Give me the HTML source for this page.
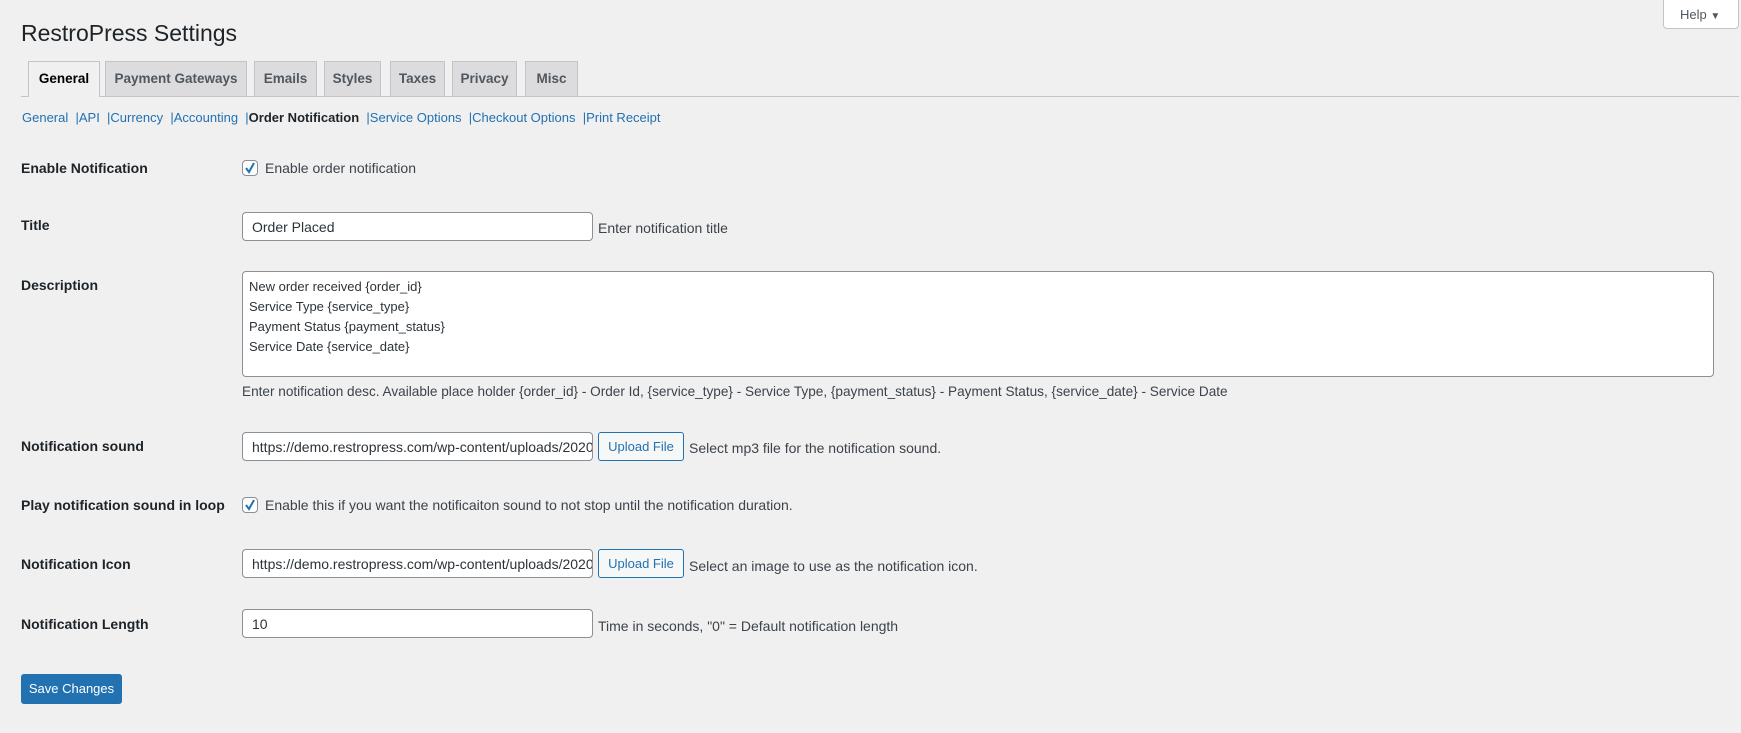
<!DOCTYPE html>
<html><head><meta charset="utf-8"><style>
*{box-sizing:border-box}
body{margin:0;width:1741px;height:733px;background:#f0f0f1;font-family:"Liberation Sans",sans-serif;font-size:14px;color:#3c434a;position:relative;overflow:hidden}
.a{position:absolute}
h1{position:absolute;left:21px;top:20px;margin:0;font-size:23px;font-weight:400;color:#1d2327}
.help{left:1663px;top:-1px;width:76px;height:30px;background:#fff;border:1px solid #c3c4c7;border-radius:0 0 4px 4px;font-size:13px;color:#50575e;padding:7px 0 0 16px}
.tabline{left:21px;top:96px;width:1718px;height:1px;background:#c3c4c7}
.tab{top:61px;height:35px;border:1px solid #c3c4c7;border-bottom:none;background:#dcdcde;font-size:13.5px;font-weight:600;color:#50575e;text-align:center;line-height:33px}
.tab.on{background:#f0f0f1;color:#000;height:36px}
.sub{left:22px;top:110px;font-size:13px;color:#2271b1}
.sub b{color:#1d2327;font-weight:600}
.lbl{left:21px;font-weight:600;color:#1d2327}
.inp{background:#fff;border:1px solid #8c8f94;border-radius:4px;height:29px;padding:6px 9px;color:#2c3338;white-space:nowrap;overflow:hidden}
.cb{width:16px;height:16px;border:1px solid #8c8f94;border-radius:4px;background:#fff}
.btn{border:1px solid #2271b1;color:#2271b1;background:#f6f7f7;border-radius:3px;height:29px;font-size:13px;text-align:center;line-height:27px}
.d{color:#3c434a}
</style></head><body>
<h1>RestroPress Settings</h1>
<div class="a help">Help <span style="font-size:10px">▼</span></div>
<div class="a tabline"></div>
<div class="a tab on" style="left:28px;width:72px">General</div>
<div class="a tab" style="left:105px;width:142px">Payment Gateways</div>
<div class="a tab" style="left:254px;width:63px">Emails</div>
<div class="a tab" style="left:324px;width:57px">Styles</div>
<div class="a tab" style="left:390px;width:55px">Taxes</div>
<div class="a tab" style="left:452px;width:65px">Privacy</div>
<div class="a tab" style="left:525px;width:53px">Misc</div>
<div class="a sub">General &nbsp;|API &nbsp;|Currency &nbsp;|Accounting &nbsp;|<b>Order Notification</b> &nbsp;|Service Options &nbsp;|Checkout Options &nbsp;|Print Receipt</div>

<div class="a lbl" style="top:160px">Enable Notification</div>
<div class="a cb" style="left:242px;top:160px"><svg width="14" height="14" viewBox="0 0 14 14"><path d="M3 7l3 4 5-9" fill="none" stroke="#2271b1" stroke-width="2"/></svg></div>
<div class="a" style="left:265px;top:160px">Enable order notification</div>

<div class="a lbl" style="top:217px">Title</div>
<div class="a inp" style="left:242px;top:212px;width:351px">Order Placed</div>
<div class="a d" style="left:598px;top:220px">Enter notification title</div>

<div class="a lbl" style="top:277px">Description</div>
<div class="a inp" style="left:242px;top:271px;width:1472px;height:106px;white-space:normal;line-height:20px;padding:5px 6px;font-size:13px">New order received {order_id}<br>Service Type {service_type}<br>Payment Status {payment_status}<br>Service Date {service_date}</div>
<div class="a d" style="left:242px;top:384px;font-size:13.6px">Enter notification desc. Available place holder {order_id} - Order Id, {service_type} - Service Type, {payment_status} - Payment Status, {service_date} - Service Date</div>

<div class="a lbl" style="top:438px">Notification sound</div>
<div class="a inp" style="left:242px;top:432px;width:351px">https://demo.restropress.com/wp-content/uploads/2020</div>
<div class="a btn" style="left:598px;top:432px;width:86px">Upload File</div>
<div class="a d" style="left:689px;top:440px">Select mp3 file for the notification sound.</div>

<div class="a lbl" style="top:497px">Play notification sound in loop</div>
<div class="a cb" style="left:242px;top:497px"><svg width="14" height="14" viewBox="0 0 14 14"><path d="M3 7l3 4 5-9" fill="none" stroke="#2271b1" stroke-width="2"/></svg></div>
<div class="a" style="left:265px;top:497px">Enable this if you want the notificaiton sound to not stop until the notification duration.</div>

<div class="a lbl" style="top:556px">Notification Icon</div>
<div class="a inp" style="left:242px;top:549px;width:351px">https://demo.restropress.com/wp-content/uploads/2020</div>
<div class="a btn" style="left:598px;top:549px;width:86px">Upload File</div>
<div class="a d" style="left:689px;top:558px">Select an image to use as the notification icon.</div>

<div class="a lbl" style="top:616px">Notification Length</div>
<div class="a inp" style="left:242px;top:609px;width:351px">10</div>
<div class="a d" style="left:598px;top:618px">Time in seconds, "0" = Default notification length</div>

<div class="a" style="left:21px;top:674px;width:101px;height:30px;background:#2271b1;border-radius:3px;color:#fff;font-size:13px;text-align:center;line-height:30px">Save Changes</div>
</body></html>
